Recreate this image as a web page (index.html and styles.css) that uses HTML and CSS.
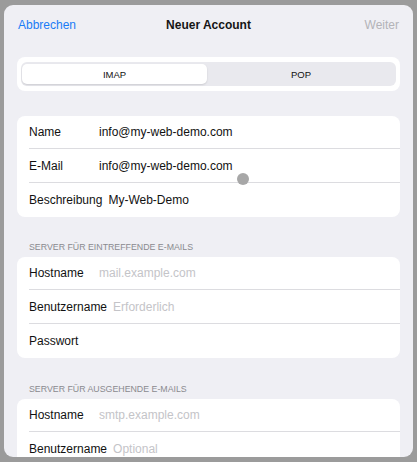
FILE: index.html
```html
<!DOCTYPE html>
<html lang="de">
<head>
<meta charset="utf-8">
<title>Neuer Account</title>
<link rel="stylesheet" href="styles.css">
</head>
<body>
<div class="modal">
  <div class="navbar">
    <span class="nav-btn nav-cancel">Abbrechen</span>
    <span class="nav-title">Neuer Account</span>
    <span class="nav-btn nav-next">Weiter</span>
  </div>

  <div class="seg-card">
    <div class="seg-track">
      <div class="seg seg-active">IMAP</div>
      <div class="seg">POP</div>
    </div>
  </div>

  <div class="card card-first">
    <div class="row"><span class="label">Name</span><span class="value">info@my-web-demo.com</span></div>
    <div class="row"><span class="label">E-Mail</span><span class="value">info@my-web-demo.com</span></div>
    <div class="row"><span class="label">Beschreibung</span><span class="value">My-Web-Demo</span></div>
  </div>

  <div class="section-title">SERVER FÜR EINTREFFENDE E-MAILS</div>
  <div class="card">
    <div class="row"><span class="label">Hostname</span><span class="value placeholder">mail.example.com</span></div>
    <div class="row"><span class="label">Benutzername</span><span class="value placeholder">Erforderlich</span></div>
    <div class="row"><span class="label">Passwort</span><span class="value"></span></div>
  </div>

  <div class="section-title section-second">SERVER FÜR AUSGEHENDE E-MAILS</div>
  <div class="card">
    <div class="row"><span class="label">Hostname</span><span class="value placeholder">smtp.example.com</span></div>
    <div class="row"><span class="label">Benutzername</span><span class="value placeholder">Optional</span></div>
  </div>

  <div class="touch-dot"></div>
</div>
</body>
</html>
```

FILE: styles.css
```css
* { box-sizing: border-box; }

html, body {
  margin: 0;
  padding: 0;
  height: 100%;
}

body {
  background: #9b9b9b;
  font-family: "Liberation Sans", Arial, sans-serif;
  color: #111;
  overflow: hidden;
}

.modal {
  position: relative;
  margin: 5px 4px 0 4px;
  width: 409px;
  height: 452px;
  background: #efeff4;
  border-radius: 9px;
  overflow: hidden;
  padding: 0 13px;
}

.navbar {
  height: 40px;
  display: flex;
  align-items: center;
  justify-content: space-between;
  padding: 0 1px 0 1px;
}

.nav-btn {
  font-size: 12px;
  width: 90px;
}

.nav-cancel { color: #1a7cf6; }
.nav-next { color: #b3b3b8; text-align: right; }

.nav-title {
  font-size: 12px;
  font-weight: 600;
  color: #151515;
}

.seg-card {
  margin-top: 12px;
  background: #fff;
  border-radius: 8px;
  height: 34px;
  padding: 5px 4px;
}

.seg-track {
  display: flex;
  height: 24px;
  background: #e9e9ee;
  border-radius: 6px;
  padding: 2px 1px;
}

.seg {
  flex: 1;
  display: flex;
  align-items: center;
  justify-content: center;
  font-size: 9.5px;
  color: #111;
  border-radius: 5px;
}

.seg-active {
  background: #fff;
  box-shadow: 0 1px 2px rgba(0,0,0,0.12);
  flex: 0 0 185px;
}

.card {
  background: #fff;
  border-radius: 8px;
  padding-left: 12px;
}

.card-first { margin-top: 25px; }

.row {
  display: flex;
  align-items: center;
  height: 34px;
  border-bottom: 1px solid #dcdce0;
  font-size: 12px;
}

.row:last-child { border-bottom: none; }

.card .row:first-child { height: 33px; }

.label {
  min-width: 64px;
  margin-right: 6px;
  color: #111;
}

.value { color: #111; }

.placeholder { color: #c4c4c8; }

.section-title {
  padding: 24px 0 0 12px;
  height: 40px;
  line-height: 12px;
  font-size: 8.8px;
  color: #8a8a8f;
}

.section-second {
  padding-top: 25px;
  height: 41px;
}

.touch-dot {
  position: absolute;
  left: 233px;
  top: 168px;
  width: 12px;
  height: 12px;
  border-radius: 50%;
  background: #a7a7a7;
}
```
